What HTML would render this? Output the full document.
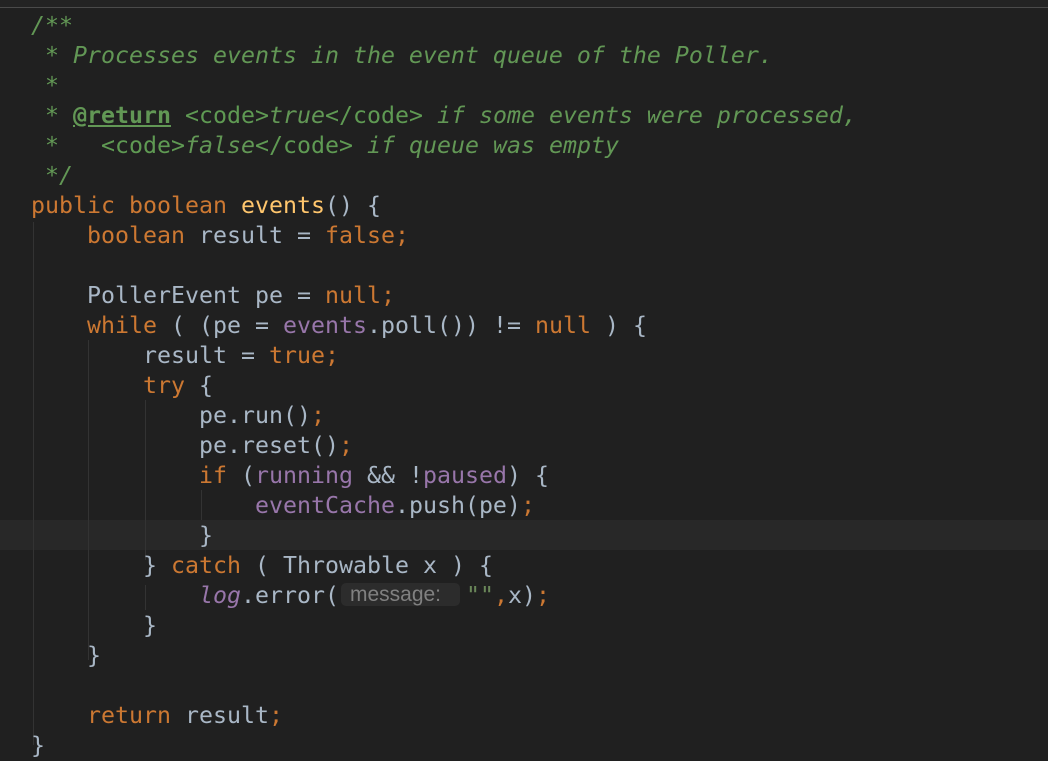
<!DOCTYPE html>
<html><head><meta charset="utf-8"><style>
html,body{margin:0;padding:0;background:#202020;width:1048px;height:756px;overflow:hidden}
.top{position:absolute;left:0;top:0;width:1048px;height:7px;background:#232323}
.tl{position:absolute;left:0;top:7px;width:1048px;height:1px;background:#4a4a4a}
.hl{position:absolute;left:0;top:520px;width:1048px;height:30px;background:#282828}
.g{position:absolute;width:1px;background:#333}
pre{position:absolute;left:31px;top:11px;margin:0;font-family:"DejaVu Sans Mono","Liberation Mono",monospace;font-size:23.25px;line-height:30px;color:#a9b7c6}
.c{color:#629755;font-style:italic}
.t{color:#5f9a53;font-style:normal}
.r{color:#629755;font-weight:bold;text-decoration:underline;font-style:normal}
.k{color:#cc7832}
.m{color:#ffc66d}
.p{color:#9876aa}
.pi{color:#9876aa;font-style:italic}
.s{color:#6a8759}
.h{display:inline-block;font-family:"Liberation Sans",sans-serif;font-size:21px;line-height:23px;height:23px;color:#808080;background:#2c2c2c;border-radius:5px;padding:0 0 0 9px;margin:0 6px 0 2px;vertical-align:top;position:relative;top:2px;width:119px;box-sizing:border-box;overflow:hidden;white-space:nowrap}
</style></head><body>
<div class="top"></div><div class="tl"></div>
<div class="hl"></div>
<div class="g" style="left:33px;top:222px;height:523px"></div>
<div class="g" style="left:88px;top:340px;height:320px"></div>
<div class="g" style="left:145px;top:400px;height:160px"></div>
<div class="g" style="left:145px;top:585px;height:25px"></div>
<div class="g" style="left:201px;top:490px;height:30px"></div>
<pre><span class="c">/**
 * Processes events in the event queue of the Poller.
 *
 * <span class="r">@return</span> <span class="t">&lt;code&gt;</span>true<span class="t">&lt;/code&gt;</span> if some events were processed,
 *   <span class="t">&lt;code&gt;</span>false<span class="t">&lt;/code&gt;</span> if queue was empty
 */</span>
<span class="k">public boolean </span><span class="m">events</span>() {
    <span class="k">boolean </span>result = <span class="k">false;</span>

    PollerEvent pe = <span class="k">null;</span>
    <span class="k">while </span>( (pe = <span class="p">events</span>.poll()) != <span class="k">null </span>) {
        result = <span class="k">true;</span>
        <span class="k">try </span>{
            pe.run()<span class="k">;</span>
            pe.reset()<span class="k">;</span>
            <span class="k">if </span>(<span class="p">running</span> &amp;&amp; !<span class="p">paused</span>) {
                <span class="p">eventCache</span>.push(pe)<span class="k">;</span>
            }
        } <span class="k">catch </span>( Throwable x ) {
            <span class="pi">log</span>.error(<span class="h">message:</span><span class="s">""</span><span class="k">,</span>x)<span class="k">;</span>
        }
    }

    <span class="k">return </span>result<span class="k">;</span>
}</pre>
</body></html>
